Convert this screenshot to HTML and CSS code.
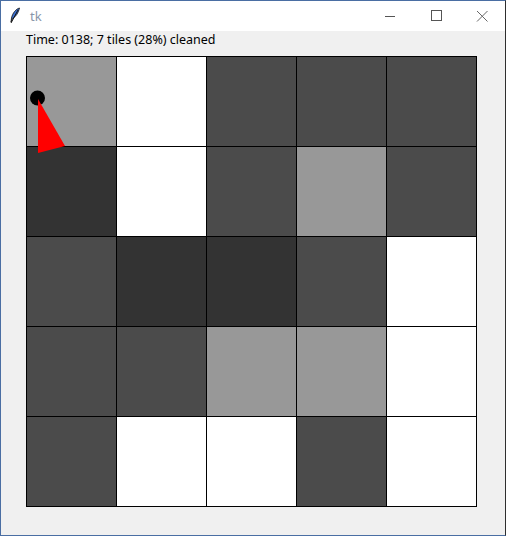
FILE: index.html
```html
<!DOCTYPE html>
<html>
<head>
<meta charset="utf-8">
<link rel="stylesheet" href="styles.css">
</head>
<body>
<div class="window">
  <div class="titlebar">
    <svg class="feather" width="12" height="18" viewBox="0 0 12 18">
      <path d="M10.5 1 C7 2 3.5 6 2.5 11 L2 15 L3.5 11.5 C6.5 10 9.5 6 10.5 1 Z" fill="#3a6fd0" stroke="#111" stroke-width="0.8"/>
      <path d="M9 3 L2 16" stroke="#111" stroke-width="1"/>
    </svg>
    <span class="title">tk</span>
    <div class="controls">
      <svg class="ctl" width="46" height="30" viewBox="0 0 46 30"><path d="M18 15.5 H28" stroke="#555" stroke-width="1"/></svg>
      <svg class="ctl" width="46" height="30" viewBox="0 0 46 30"><rect x="18.5" y="9.5" width="10" height="10" fill="none" stroke="#555" stroke-width="1"/></svg>
      <svg class="ctl" width="46" height="30" viewBox="0 0 46 30"><path d="M18 10 L28.5 20.5 M28.5 10 L18 20.5" stroke="#666" stroke-width="1"/></svg>
    </div>
  </div>
  <div class="content">
    <div class="status">Time: 0138; 7 tiles (28%) cleaned</div>
    <div class="grid">
      <div class="cell light"></div><div class="cell white"></div><div class="cell mid"></div><div class="cell mid"></div><div class="cell mid"></div>
      <div class="cell dark"></div><div class="cell white"></div><div class="cell mid"></div><div class="cell light"></div><div class="cell mid"></div>
      <div class="cell mid"></div><div class="cell dark"></div><div class="cell dark"></div><div class="cell mid"></div><div class="cell white"></div>
      <div class="cell mid"></div><div class="cell mid"></div><div class="cell light"></div><div class="cell light"></div><div class="cell white"></div>
      <div class="cell mid"></div><div class="cell white"></div><div class="cell white"></div><div class="cell mid"></div><div class="cell white"></div>
      <svg class="robot" width="450" height="450" viewBox="0 0 450 450">
        <circle cx="10.5" cy="41" r="7.5" fill="#000"/>
        <polygon points="11,42 11,96 38,89" fill="#ff0000"/>
      </svg>
    </div>
  </div>
</div>
</body>
</html>
```
FILE: styles.css
```css
html, body {
  margin: 0;
  padding: 0;
  background: #f0f0f0;
}
.window {
  width: 506px;
  height: 536px;
  box-sizing: border-box;
  border: 1px solid #4a6ea3;
  border-right-color: #2e2e2e;
  display: flex;
  flex-direction: column;
  background: #f0f0f0;
}
.titlebar {
  height: 30px;
  background: #ffffff;
  display: flex;
  align-items: center;
  position: relative;
}
.feather {
  margin-left: 8px;
  display: block;
}
.title {
  margin-left: 9px;
  font-family: "Noto Sans", "Open Sans", sans-serif;
  font-size: 13px;
  color: #8996aa;
}
.controls {
  margin-left: auto;
  display: flex;
}
.ctl {
  display: block;
}
.content {
  flex: 1;
  padding-left: 25px;
  font-family: "Noto Sans", "Open Sans", sans-serif;
}
.status {
  font-size: 12.5px;
  line-height: 16px;
  margin-top: 1px;
  color: #000;
}
.grid {
  margin-top: 8px;
  position: relative;
  display: grid;
  grid-template-columns: repeat(5, 90px);
  grid-template-rows: repeat(5, 90px);
  width: 451px;
  box-sizing: border-box;
  border-left: 1px solid #000;
  border-top: 1px solid #000;
}
.cell {
  border-right: 1px solid #000;
  border-bottom: 1px solid #000;
}
.light { background: #989898; }
.white { background: #ffffff; }
.mid { background: #4b4b4b; }
.dark { background: #333333; }
.robot {
  position: absolute;
  left: 0;
  top: 0;
}
```
